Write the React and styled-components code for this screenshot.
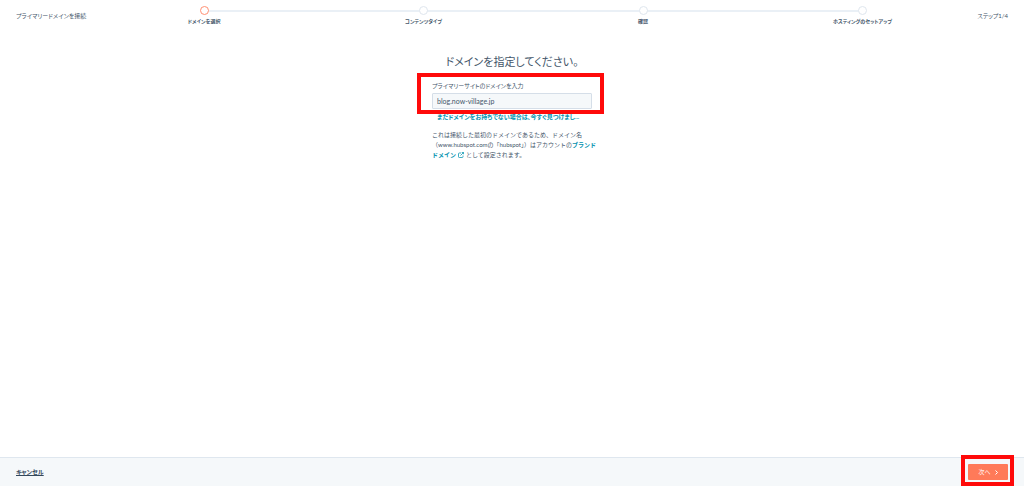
import React, { useState } from 'react';
import styled, { createGlobalStyle } from 'styled-components';

const GlobalStyle = createGlobalStyle`
  * {
    box-sizing: border-box;
  }

  body {
    margin: 0;
    background: #ffffff;
    color: #44566a;
    font-family: Lato, "Noto Sans CJK JP", sans-serif;
    font-size: 6px;
    line-height: 10px;
    font-feature-settings: "palt";
  }
`;

const Page = styled.div`
  display: flex;
  flex-direction: column;
  min-height: 100vh;
`;

const Header = styled.header`
  display: flex;
  padding: 6px 16px 0;
`;

const HeaderText = styled.span`
  padding-top: 5px;
  white-space: nowrap;
`;

const Steps = styled.ol`
  flex: 1;
  display: grid;
  grid-template-columns: repeat(4, 1fr);
  margin: 0 5px 0 8px;
  padding: 0;
  list-style: none;
`;

const Step = styled.li`
  position: relative;
  display: flex;
  flex-direction: column;
  align-items: center;
  gap: 2px;
  font-size: 5px;
  line-height: 8px;
  font-weight: bold;

  &:not(:last-child)::after {
    content: '';
    position: absolute;
    top: 4px;
    left: 50%;
    width: 100%;
    height: 2px;
    background: #eaf0f6;
  }
`;

const StepDot = styled.span`
  position: relative;
  z-index: 1;
  width: 9px;
  height: 9px;
  border: 1px solid ${({ $active }) => ($active ? '#ff8f73' : '#dfe6ee')};
  border-radius: 50%;
  background: #ffffff;
`;

const Main = styled.main`
  flex: 1;
  width: 160px;
  margin: 0 auto;
  padding-top: 29px;
`;

const Title = styled.h1`
  margin: 0 0 11px;
  font-size: 11px;
  line-height: 16px;
  font-weight: normal;
  text-align: center;
  white-space: nowrap;
`;

const Field = styled.div`
  position: relative;
  display: flex;
  flex-direction: column;
  gap: 2px;
`;

const Label = styled.label`
  line-height: 10px;
`;

const Input = styled.input`
  width: 100%;
  height: 16px;
  padding: 0 4px;
  border: 1px solid #d5dee8;
  border-radius: 1px;
  background: #f5f8fa;
  color: #44566a;
  font: inherit;
  font-size: 7px;
`;

const Highlight = styled.span`
  position: absolute;
  inset: ${({ $inset }) => $inset};
  border: 4px solid #ff0a0a;
  pointer-events: none;
`;

const Link = styled.a`
  color: #0091ae;
  font-weight: bold;
  text-decoration: none;
`;

const FindDomainLink = styled(Link)`
  display: block;
  margin: 3px 5px 8px;
  white-space: nowrap;
`;

const Note = styled.p`
  margin: 0;
  white-space: nowrap;
  font-feature-settings: normal;
`;

const ExternalIcon = styled.svg`
  width: 6px;
  height: 6px;
  margin: 0 2px;
  vertical-align: -1px;
`;

const Footer = styled.footer`
  display: flex;
  align-items: center;
  justify-content: space-between;
  padding: 6px 16px;
  border-top: 1px solid #dfe7ef;
  background: #f5f8fa;
`;

const CancelButton = styled.button`
  padding: 0;
  border: 0;
  background: none;
  color: #33475b;
  font: inherit;
  font-weight: bold;
  text-decoration: underline;
  cursor: pointer;
`;

const NextWrapper = styled.div`
  position: relative;
`;

const NextButton = styled.button`
  display: flex;
  align-items: center;
  justify-content: center;
  gap: 4px;
  width: 40px;
  height: 16px;
  padding: 0;
  border: 0;
  border-radius: 1px;
  background: #ff7a59;
  color: #ffffff;
  font: inherit;
  cursor: pointer;
`;

const steps = ['ドメインを選択', 'コンテンツタイプ', '確認', 'ホスティングのセットアップ'];

const App = () => {
  const [domain, setDomain] = useState('blog.now-village.jp');

  return (
    <Page>
      <GlobalStyle />
      <Header>
        <HeaderText>プライマリードメインを接続</HeaderText>
        <Steps>
          {steps.map((step, index) => (
            <Step key={step}>
              <StepDot $active={index === 0} />
              {step}
            </Step>
          ))}
        </Steps>
        <HeaderText>ステップ1/4</HeaderText>
      </Header>
      <Main>
        <Title>ドメインを指定してください。</Title>
        <Field>
          <Label htmlFor="domain">プライマリーサイトのドメインを入力</Label>
          <Input id="domain" type="text" value={domain} onChange={(event) => setDomain(event.target.value)} />
          <Highlight $inset="-8px -12px -5px -15px" />
        </Field>
        <FindDomainLink href="#find">まだドメインをお持ちでない場合は、今すぐ見つけまし...</FindDomainLink>
        <Note>
          これは接続した最初のドメインであるため、ドメイン名
          <br />
          （www.hubspot.comの「hubspot」）はアカウントの
          <Link href="#brand">
            ブランド
            <br />
            ドメイン
            <ExternalIcon viewBox="0 0 12 12" fill="none" stroke="currentColor" strokeWidth="1.5">
              <path d="M6 2H2.5a1.5 1.5 0 0 0-1.5 1.5v6A1.5 1.5 0 0 0 2.5 11h6A1.5 1.5 0 0 0 10 9.5V7M7.5 1H11v3.5M11 1L5 7" />
            </ExternalIcon>
          </Link>
          として設定されます。
        </Note>
      </Main>
      <Footer>
        <CancelButton type="button">キャンセル</CancelButton>
        <NextWrapper>
          <NextButton type="button">
            次へ
            <svg width="3" height="5" viewBox="0 0 3 5" fill="none" stroke="currentColor">
              <path d="M0.5 0.5L2.5 2.5L0.5 4.5" />
            </svg>
          </NextButton>
          <Highlight $inset="-9px -6px -6px -7px" />
        </NextWrapper>
      </Footer>
    </Page>
  );
};

export default App;
